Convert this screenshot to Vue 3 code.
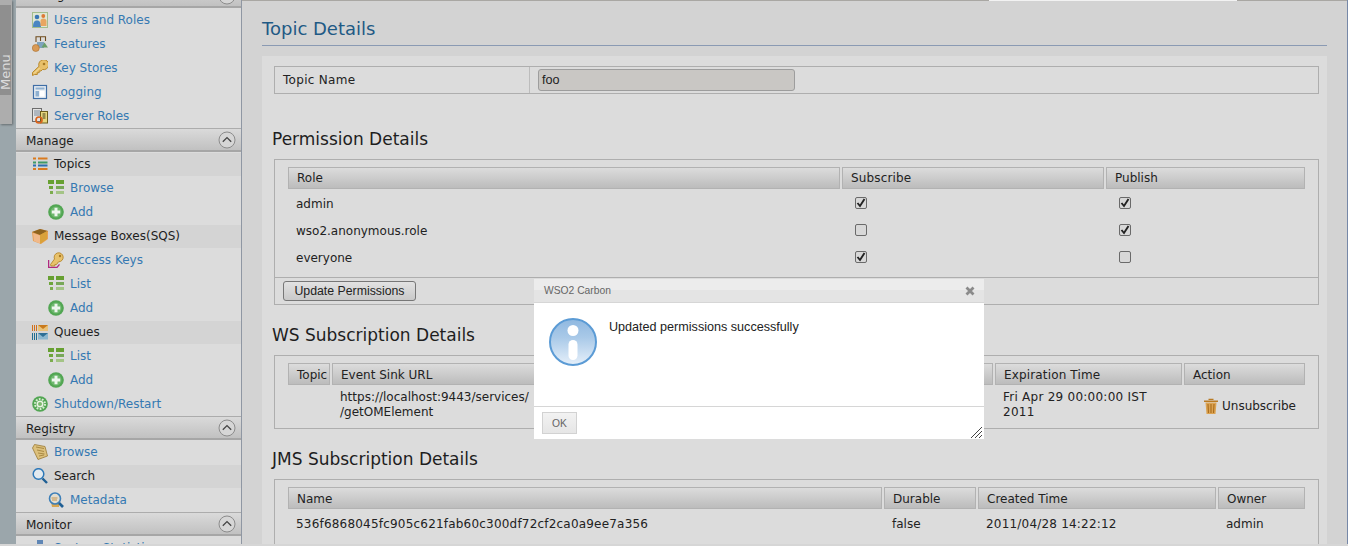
<script setup>
const sections = [
  { title: 'Configure', first: true, items: [
    { t: 'Users and Roles', i: 'users' }, { t: 'Features', i: 'features' }, { t: 'Key Stores', i: 'key' },
    { t: 'Logging', i: 'logging' }, { t: 'Server Roles', i: 'roles' } ] },
  { title: 'Manage', items: [
    { t: 'Topics', i: 'topics', group: true }, { t: 'Browse', i: 'grid', sub: true }, { t: 'Add', i: 'add', sub: true },
    { t: 'Message Boxes(SQS)', i: 'box', group: true }, { t: 'Access Keys', i: 'akey', sub: true },
    { t: 'List', i: 'grid', sub: true }, { t: 'Add', i: 'add', sub: true },
    { t: 'Queues', i: 'queues', group: true }, { t: 'List', i: 'grid', sub: true }, { t: 'Add', i: 'add', sub: true },
    { t: 'Shutdown/Restart', i: 'gear' } ] },
  { title: 'Registry', items: [
    { t: 'Browse', i: 'papers' }, { t: 'Search', i: 'search', group: true }, { t: 'Metadata', i: 'meta', sub: true } ] },
  { title: 'Monitor', items: [ { t: 'System Statistics', i: 'stats' } ] },
]
const perms = [
  { role: 'admin', s: true, p: true },
  { role: 'wso2.anonymous.role', s: false, p: true },
  { role: 'everyone', s: true, p: false },
]
</script>

<template>
  <div class="page">
    <svg class="defs" width="0" height="0" aria-hidden="true">
      <defs>
        <symbol id="users" viewBox="0 0 16 16">
          <rect x=".5" y=".5" width="15" height="15" fill="#dfe6d4" stroke="#a3bd8c"/>
          <circle cx="5" cy="5" r="2.3" fill="#3a77b5"/><path d="M1 15c0-5 1.5-6.5 4-6.5s4 1.5 4 6.5z" fill="#4a86c2"/>
          <circle cx="11.3" cy="4" r="1.9" fill="#de7a35"/><path d="M8.5 14V9c0-1.5 1-2.5 2.8-2.5S14.500 7.500 14.500 9v5z" fill="#e8a561"/>
        </symbol>
        <symbol id="features" viewBox="0 0 16 16">
          <path d="M4 6V.8h9.500V5M8.500 .8V5" fill="none" stroke="#6f4c1e" stroke-width="1.100"/>
          <rect x="5" y="6" width="7" height="6" fill="#7fa3bd"/><path d="M9.500 11.500l3-5 3.500 5z" fill="#6aa06a"/>
          <circle cx="3.800" cy="12" r="3.500" fill="#d99a55" stroke="#a86f2d" stroke-width=".6"/>
        </symbol>
        <symbol id="key" viewBox="0 0 16 16">
          <path d="M.5 12.500L7 6.300A5 5 0 1 1 10.500 9.500L9 11H7.200v1.700H5.300v1.800H2.500L.5 15.500z" fill="#e8c06a" stroke="#b8892f" stroke-width="1"/>
          <circle cx="12" cy="4" r="1.300" fill="#a87a26"/>
          <path d="M2 13.500L7.500 8" stroke="#f6e2a8" stroke-width="1"/>
        </symbol>
        <symbol id="akey" viewBox="0 0 16 16">
          <path d="M.6 8v7.400h8.400l2.500-3" fill="none" stroke="#b02a80" stroke-width="1.300"/>
          <path d="M2.500 12.500L6.500 7A4.500 4.500 0 1 1 10.500 9.800L8.500 12.500H6.800V14H3z" fill="#e8c26c" stroke="#b5862c" stroke-width=".9"/>
          <circle cx="12" cy="4" r="1.200" fill="#a87a26"/>
        </symbol>
        <symbol id="logging" viewBox="0 0 16 16">
          <rect x="1.500" y="1.500" width="13" height="13" fill="#e9eef3" stroke="#3f6ea6" stroke-width="1.200"/>
          <rect x="3.500" y="3.500" width="9" height="2" fill="#8fb0d0"/><rect x="3.500" y="7" width="3.500" height="5.500" fill="#8fb0d0"/><rect x="8" y="7" width="4.500" height="5.500" fill="#fff"/>
        </symbol>
        <symbol id="roles" viewBox="0 0 16 16">
          <rect x=".5" y=".5" width="9" height="13" fill="#e3e3e3" stroke="#6d6d6d"/>
          <path d="M2 3h6M2 5h6M2 7h6" stroke="#7a8b9c"/>
          <rect x="8.500" y="3.500" width="7" height="11.500" fill="#e7d77e" stroke="#6b5d1c"/>
          <path d="M10.500 6h3M10.500 8h3M10.500 10h3" stroke="#46411c"/>
          <circle cx="7" cy="12" r="3" fill="none" stroke="#d9641e" stroke-width="1.700"/>
        </symbol>
        <symbol id="topics" viewBox="0 0 16 16">
          <path d="M1 2.500h3M6 2.500h9.500" stroke="#d97a1e" stroke-width="2"/>
          <path d="M1 6.500h3M6 6.500h9.500" stroke="#3f9a66" stroke-width="2"/>
          <path d="M1 9.500h3M6 9.500h9.500" stroke="#2d6fb0" stroke-width="2"/>
          <path d="M1 13h3M6 13h9.500" stroke="#d97a1e" stroke-width="2"/>
        </symbol>
        <symbol id="grid" viewBox="0 0 16 16">
          <rect x="0" y="0" width="6" height="4" fill="#67a032"/><rect x="8" y="0" width="8" height="4" fill="#67a032"/>
          <rect x="1" y="6" width="4" height="3" fill="#6da53a"/><rect x="8" y="6" width="8" height="3" fill="#78a858"/>
          <rect x="2" y="11" width="3" height="3" fill="#7cac4e"/><rect x="8" y="11" width="8" height="3" fill="#a4c486"/>
        </symbol>
        <symbol id="add" viewBox="0 0 16 16">
          <circle cx="8" cy="8" r="7.800" fill="#52a653"/><circle cx="8" cy="8" r="5.500" fill="#6fb96f"/>
          <path d="M8 3.800v8.400M3.800 8h8.400" stroke="#eef6ee" stroke-width="3"/>
        </symbol>
        <symbol id="box" viewBox="0 0 16 16">
          <path d="M0 4l8-3 8 2v8l-7 5-8-3z" fill="#e8a056"/><path d="M0 4l8 3 8-4-8-2z" fill="#8e6420"/>
          <path d="M8 7v9l7-5V3z" fill="#d9a23a"/><path d="M1 5l7 2.500v8L2 13z" fill="#f0b98a"/>
        </symbol>
        <symbol id="queues" viewBox="0 0 16 16">
          <path d="M.5 1v6M2.500 1v6M4.500 1v6" stroke="#d2711c"/>
          <rect x="6" y="1" width="10" height="6" fill="#e8c27a"/><path d="M6 1h10l-5 4z" fill="#c97a1c"/>
          <path d="M.5 9v7M2.500 9v7M4.500 9v7" stroke="#1f6f93"/>
          <rect x="6" y="9" width="10" height="6.500" fill="#8bb7cf"/><path d="M6 9h10l-5 4z" fill="#2d6f96"/>
        </symbol>
        <symbol id="gear" viewBox="0 0 16 16">
          <circle cx="8" cy="8" r="7.800" fill="#52a653"/><circle cx="8" cy="8" r="5" fill="none" stroke="#d9ecd2" stroke-width="2" stroke-dasharray="1.800 1.300"/>
          <circle cx="8" cy="8" r="3.500" fill="#e9f3e3"/><circle cx="8" cy="8" r="2" fill="#7cba6f"/>
        </symbol>
        <symbol id="papers" viewBox="0 0 16 16">
          <path d="M2.500 .5L13 2.500 15.500 12 6 15.500 .5 4z" fill="#dcc07c" stroke="#9a7a35" stroke-width=".8"/>
          <path d="M4 3l8 1.500M5 6l7 1.500M6 9l6.500 1M7 12l5-1" stroke="#a98a44"/>
        </symbol>
        <symbol id="search" viewBox="0 0 16 16">
          <circle cx="6.500" cy="6" r="5.300" fill="#e3eaef" stroke="#2d78b8" stroke-width="1.500"/>
          <path d="M10.500 10.500l4.500 4.500" stroke="#1f5f94" stroke-width="2.400"/>
        </symbol>
        <symbol id="meta" viewBox="0 0 16 16">
          <path d="M2 5h9v10H4z" fill="#d9a650"/>
          <circle cx="7" cy="6.500" r="5.500" fill="#e2ddd0" stroke="#3d7fb8" stroke-width="1.600"/>
          <path d="M3.500 6h6M4 8h5" stroke="#c49650" stroke-width="1.200"/>
          <path d="M11 11l4 4" stroke="#1f5f94" stroke-width="2.600"/>
        </symbol>
        <symbol id="stats" viewBox="0 0 16 16"><rect x="5" y="0" width="6" height="16" fill="#5f86b5"/></symbol>
        <symbol id="trash" viewBox="0 0 16 16">
          <path d="M5.500 2V.8h5V2M1 2.500h14V4H1z" fill="#b97a22"/>
          <path d="M2.500 4.500h11L12.500 16h-9z" fill="#dca352"/>
          <path d="M5 6l.5 9M8 6v9M11 6l-.5 9" stroke="#a96d1c" stroke-width="1.100"/>
        </symbol>
        <symbol id="check" viewBox="0 0 12 12">
          <path d="M2.500 6l2.500 3L9.500 2" fill="none" stroke="#222" stroke-width="1.900"/>
        </symbol>
      </defs>
    </svg>

    <div class="screen">
      <aside class="side">
        <section v-for="s in sections" :key="s.title">
          <h4 class="shead" :class="{ first: s.first }">
            <span>{{ s.title }}</span>
            <svg class="chev" width="18" height="18" viewBox="0 0 18 18">
              <circle cx="9" cy="9" r="8" fill="#d6d6d6" stroke="#8c8c8c"/>
              <path d="M4.800 10.800L9 6.600l4.200 4.200" fill="none" stroke="#444" stroke-width="1.300"/>
            </svg>
          </h4>
          <div v-for="(it, n) in s.items" :key="n" class="item" :class="{ sub: it.sub, group: it.group }">
            <svg class="ico" width="16" height="16"><use :href="'#' + it.i"/></svg>
            <span>{{ it.t }}</span>
          </div>
        </section>
      </aside>

      <main class="main">
        <div class="topline"><i/><b/><em/></div>
        <h2 class="title">Topic Details</h2>
        <div class="panel">
          <div class="box namebox">
            <div class="namel">Topic Name</div>
            <div class="namev"><span class="field">foo</span></div>
          </div>

          <h3 class="first-h">Permission Details</h3>
          <div class="box">
            <div class="thead perm">
              <div class="th">Role</div><div class="th spaced">Subscribe</div><div class="th">Publish</div>
            </div>
            <div v-for="r in perms" :key="r.role" class="perm prow">
              <div class="pad">{{ r.role }}</div>
              <div class="cbcell"><span class="cb"><svg v-if="r.s" width="12" height="12"><use href="#check"/></svg></span></div>
              <div class="cbcell"><span class="cb"><svg v-if="r.p" width="12" height="12"><use href="#check"/></svg></span></div>
            </div>
            <div class="actions"><button class="btn">Update Permissions</button></div>
          </div>

          <h3>WS Subscription Details</h3>
          <div class="box ws">
            <div class="thead wsg">
              <div class="th tight">Topic</div><div class="th">Event Sink URL</div><div class="th spaced">Expiration Time</div><div class="th">Action</div>
            </div>
            <div class="wsg wsrow">
              <div></div>
              <div class="url">https://localhost:9443/services/<br>/getOMElement</div>
              <div class="url expires">Fri Apr 29 00:00:00 IST<br>2011</div>
              <div class="unsub"><svg width="16" height="16"><use href="#trash"/></svg><span>Unsubscribe</span></div>
            </div>
          </div>

          <h3>JMS Subscription Details</h3>
          <div class="box jms">
            <div class="thead jmsg">
              <div class="th">Name</div><div class="th">Durable</div><div class="th">Created Time</div><div class="th">Owner</div>
            </div>
            <div class="jmsg jmsrow">
              <div class="digits">536f6868045fc905c621fab60c300df72cf2ca0a9ee7a356</div><div>false</div><div class="digits">2011/04/28 14:22:12</div><div>admin</div>
            </div>
          </div>
        </div>
      </main>
    </div>

    <div class="bottom"></div>

    <div class="tab"><span>Menu</span></div>

    <div class="dialog">
      <div class="dtitle">
        <span>WSO2 Carbon</span>
        <svg width="10" height="10" viewBox="0 0 10 10"><path d="M1.500 1.500l7 7M8.500 1.500l-7 7" stroke="#8a8a8a" stroke-width="2.800"/></svg>
      </div>
      <div class="dbody">
        <svg width="48" height="48" viewBox="0 0 48 48">
          <defs>
            <linearGradient id="ig" x1="0" y1="0" x2="0" y2="1">
              <stop offset="0" stop-color="#8fb8e0"/><stop offset=".4" stop-color="#a9c9e8"/><stop offset="1" stop-color="#e6f0fa"/>
            </linearGradient>
          </defs>
          <circle cx="24" cy="24" r="23" fill="url(#ig)" stroke="#5b9bd5" stroke-width="2"/>
          <circle cx="24" cy="12.500" r="5.500" fill="#fff"/>
          <rect x="19.500" y="22" width="9" height="20" rx="4.500" fill="#fff"/>
        </svg>
        <p>Updated permissions successfully</p>
      </div>
      <div class="dfoot">
        <button class="okbtn">OK</button>
        <svg class="grip" width="12" height="12" viewBox="0 0 12 12"><path d="M1 12L12 1M5 12l7-7M9 12l3-3" stroke="#444" stroke-width="1"/></svg>
      </div>
    </div>
  </div>
</template>

<style>
html, body { margin: 0; background: #d3d3d3; overflow: hidden; }
</style>

<style scoped>
.page {
  position: relative;
  width: 1348px;
  height: 546px;
  overflow: hidden;
  font: 12px/15px "DejaVu Sans", sans-serif;
  color: #222;
  display: flex;
  flex-direction: column;
}
.defs { position: absolute; }
.screen { flex: 1; min-height: 0; display: flex; overflow: hidden; background: #9ba6ab; }
.bottom { height: 2px; background: #d6d6d6; }

.side {
  width: 225px;
  margin-left: 16px;
  flex: none;
  background: #dcdcdc;
  border-right: 1px solid #8f97a3;
  overflow: hidden;
}
.shead {
  margin: 0;
  height: 24px;
  box-sizing: border-box;
  display: flex;
  align-items: center;
  justify-content: space-between;
  padding: 0 5px 0 10px;
  font-weight: normal;
  font-size: 12px;
  color: #1e1e1e;
  border-top: 1px solid #acacac;
  border-bottom: 2px solid #a6a6a6;
  background: linear-gradient(#dadada, #c1c1c1);
}
.shead span { padding-top: 4px; }
.shead.first { margin-top: -16px; }
.shead.first span { padding-top: 0; }
.chev { flex: none; }
.item {
  height: 24px;
  display: flex;
  align-items: center;
  gap: 6px;
  padding-left: 16px;
  color: #3579b2;
}
.item.sub { padding-left: 32px; }
.item.group { color: #1e1e1e; background: linear-gradient(#dcdcdc 1px, #d4d4d4 1px); }
.ico { flex: none; }

.main {
  flex: 1;
  min-width: 0;
  background: #d3d3d3;
  border-right: 1px solid #7688a8;
  padding: 0 20px;
  overflow: hidden;
}
.topline { display: flex; height: 1px; margin: 0 -20px; }
.topline i { width: 747px; background: #a9a7a3; }
.topline b { width: 248px; background: #f2f2f2; }
.topline em { flex: 1; background: #a9a7a3; }
.title {
  margin: 18px 0 0;
  height: 26px;
  font-weight: normal;
  font-size: 18px;
  line-height: 20px;
  color: #1f5a85;
  border-bottom: 1px solid #8a9ab3;
}
.panel { margin-top: 10px; background: #dcdcdc; padding: 10px 8px 0 12px; height: 490px; box-sizing: border-box; }
h3 {
  margin: 20px 0 10px -2px;
  font-weight: normal;
  font-size: 17px;
  line-height: 20px;
  color: #1e1e1e;
}
h3.first-h { margin-top: 35px; }
.box {
  border: 1px solid #aeaeae;
  padding: 7px 13px 0;
}
.namebox { display: flex; height: 28px; padding: 0; box-sizing: border-box; align-items: stretch; }
.namel {
  width: 255px;
  box-sizing: border-box;
  padding-left: 8px;
  border-right: 1px solid #bcbcbc;
  display: flex;
  align-items: center;
  letter-spacing: .3px;
}
.namev { padding-left: 8px; display: flex; align-items: center; }
.field {
  width: 252px;
  height: 20px;
  padding-left: 3px;
  line-height: 20px;
  border: 1px solid #9d9d9d;
  border-radius: 3px;
  background: #c9c7c4;
  color: #222;
  font-family: "Liberation Sans", Arial, sans-serif;
  font-size: 12.6px;
}
.thead { height: 22px; }
.th {
  box-sizing: border-box;
  height: 22px;
  line-height: 20px;
  padding-left: 8px;
  border: 1px solid #b2b2b2;
  background: linear-gradient(#dcdcdc, #bcbcbc);
  color: #222;
}
.th.spaced { letter-spacing: .15px; }
.th.tight { overflow: hidden; }
.perm { display: grid; grid-template-columns: 552px 262px 199px; column-gap: 2px; }
.prow { height: 27px; align-items: center; }
.pad { padding: 4px 0 0 8px; }
.cbcell { padding-left: 13px; display: flex; }
.cb {
  width: 12px;
  height: 12px;
  box-sizing: border-box;
  border: 1px solid #6a6a6a;
  border-radius: 2px;
  background: #d8d8d8;
  position: relative;
  display: block;
}
.cb svg { position: absolute; left: -1px; top: -1px; }
.actions {
  margin: 7px -13px 0;
  height: 27px;
  box-sizing: border-box;
  border-top: 1px solid #aeaeae;
  padding: 3px 0 0 8px;
}
.btn {
  display: block;
  width: 133px;
  height: 20px;
  padding: 0;
  margin: 0;
  font: 12.3px "Liberation Sans", Arial, sans-serif;
  color: #222;
  border: 1px solid #777;
  border-radius: 3px;
  background: linear-gradient(#e2e2e2, #c9c9c9);
}
.ws { height: 65px; }
.ws .th, .jms .th { line-height: 22px; }
.wsg { display: grid; grid-template-columns: 42px 661px 187px 121px; column-gap: 2px; }
.wsrow { padding-top: 5px; }
.url { padding-left: 8px; }
.expires { letter-spacing: .25px; }
.unsub { display: flex; align-items: center; gap: 3px; padding: 6px 0 0 19px; height: 20px; }
.jms { height: 80px; }
.jmsg { display: grid; grid-template-columns: 594px 92px 238px 87px; column-gap: 2px; }
.jmsrow { padding-top: 8px; }
.jmsrow > div { padding-left: 8px; }
.digits { letter-spacing: .2px; }

.tab {
  position: absolute;
  left: 0;
  top: 0;
  width: 12px;
  height: 124px;
  background: #adadad;
  box-shadow: 1px 1px 2px rgba(0, 0, 0, .35);
}
.tab span {
  position: absolute;
  left: 0;
  top: 5px;
  width: 11px;
  height: 90px;
  box-sizing: border-box;
  padding-top: 5px;
  background: #8f8f8f;
  color: #dcdcdc;
  font-size: 13px;
  line-height: 11px;
  writing-mode: vertical-rl;
  transform: rotate(180deg);
  text-align: left;
}

.dialog {
  position: absolute;
  left: 534px;
  top: 279px;
  width: 450px;
  height: 160px;
  background: #fff;
  display: flex;
  flex-direction: column;
  font-family: "Liberation Sans", Arial, sans-serif;
}
.dtitle {
  height: 24px;
  box-sizing: border-box;
  border-bottom: 1px solid #d6d6d6;
  background: linear-gradient(#ececec 50%, #e4e4e4 50%);
  display: flex;
  align-items: center;
  justify-content: space-between;
  padding: 0 9px 0 10px;
  font-size: 10.3px;
  color: #666;
}
.dtitle svg { margin-top: 1px; }
.dbody { flex: 1; display: flex; padding: 15px 0 0 15px; gap: 12px; }
.dbody p { margin: 1px 0 0; font-size: 12.6px; line-height: 16px; color: #222; }
.dfoot {
  position: relative;
  height: 33px;
  box-sizing: border-box;
  border-top: 1px solid #d6d6d6;
  padding: 5px 0 0 8px;
}
.okbtn {
  display: block;
  width: 35px;
  height: 22px;
  padding: 0;
  font: 10.3px "Liberation Sans", Arial, sans-serif;
  color: #666;
  border: 1px solid #d2d2d2;
  background: linear-gradient(#f2f2f2, #e6e6e6);
}
.grip { position: absolute; right: 2px; bottom: 1px; }
</style>
